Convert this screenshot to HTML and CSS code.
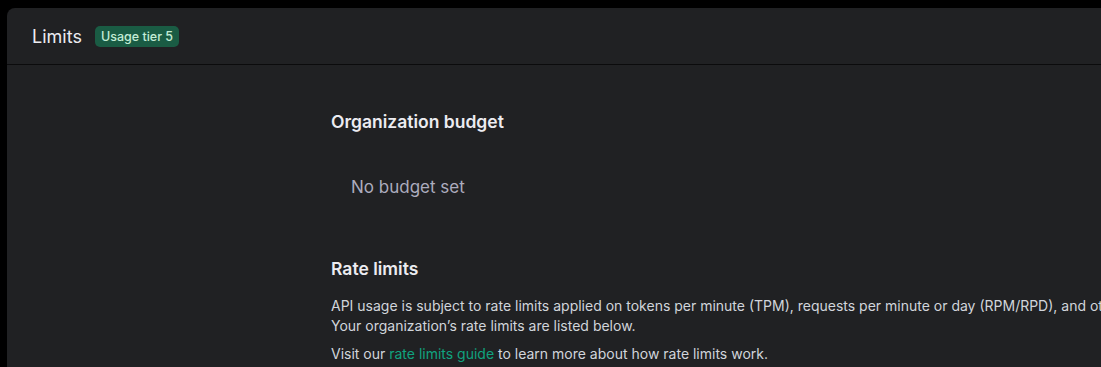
FILE: index.html
```html
<!DOCTYPE html>
<html>
<head>
<meta charset="utf-8">
<link rel="stylesheet" href="styles.css">
</head>
<body>
<div class="panel">
  <header class="head">
    <h1 class="title">Limits</h1>
    <span class="badge">Usage tier 5</span>
  </header>
  <main class="content">
    <section class="section">
      <h2 class="h2">Organization budget</h2>
      <div class="empty">No budget set</div>
    </section>
    <section class="section rate">
      <h2 class="h2">Rate limits</h2>
      <p class="p">API usage is subject to rate limits applied on tokens per minute (TPM), requests per minute or day (RPM/RPD), and other model-specific limits.<br>Your organization’s rate limits are listed below.</p>
      <p class="p">Visit our <a class="link" href="#">rate limits guide</a> to learn more about how rate limits work.</p>
    </section>
  </main>
</div>
</body>
</html>
```
FILE: styles.css
```css
html, body {
  margin: 0;
  padding: 0;
  background: #000;
  overflow: hidden;
  height: 367px;
}
body {
  font-family: Inter, "Noto Sans", sans-serif;
  color: #ececf1;
  padding: 8px 0 0 7px;
}
.panel {
  width: 1500px;
  height: 400px;
  background: #202123;
  border-top-left-radius: 8px;
}
.head {
  height: 57px;
  box-sizing: border-box;
  border-bottom: 1px solid #0b0b0c;
  display: flex;
  align-items: center;
  padding-left: 25px;
  gap: 13px;
}
.title {
  margin: 0;
  font-size: 18px;
  font-weight: 400;
  color: #ececf1;
}
.badge {
  background: #1a5c44;
  color: #c3ecd5;
  font-size: 12.5px;
  font-weight: 500;
  line-height: 21px;
  padding: 0 6px;
  border-radius: 5px;
}
.content {
  padding: 46px 0 0 324px;
}
.h2 {
  margin: 0;
  font-size: 17.5px;
  font-weight: 600;
  line-height: 22px;
  color: #ececf1;
}
.empty {
  margin: 44px 0 0 20px;
  font-size: 17px;
  line-height: 20px;
  color: #acacbe;
}
.rate {
  margin-top: 61px;
}
.rate .h2 {
  margin-bottom: 16px;
}
.p {
  margin: 0 0 8px;
  font-size: 14px;
  line-height: 20px;
  color: #d1d5db;
  white-space: nowrap;
}
.link {
  color: #10a37f;
  text-decoration: none;
}
```
